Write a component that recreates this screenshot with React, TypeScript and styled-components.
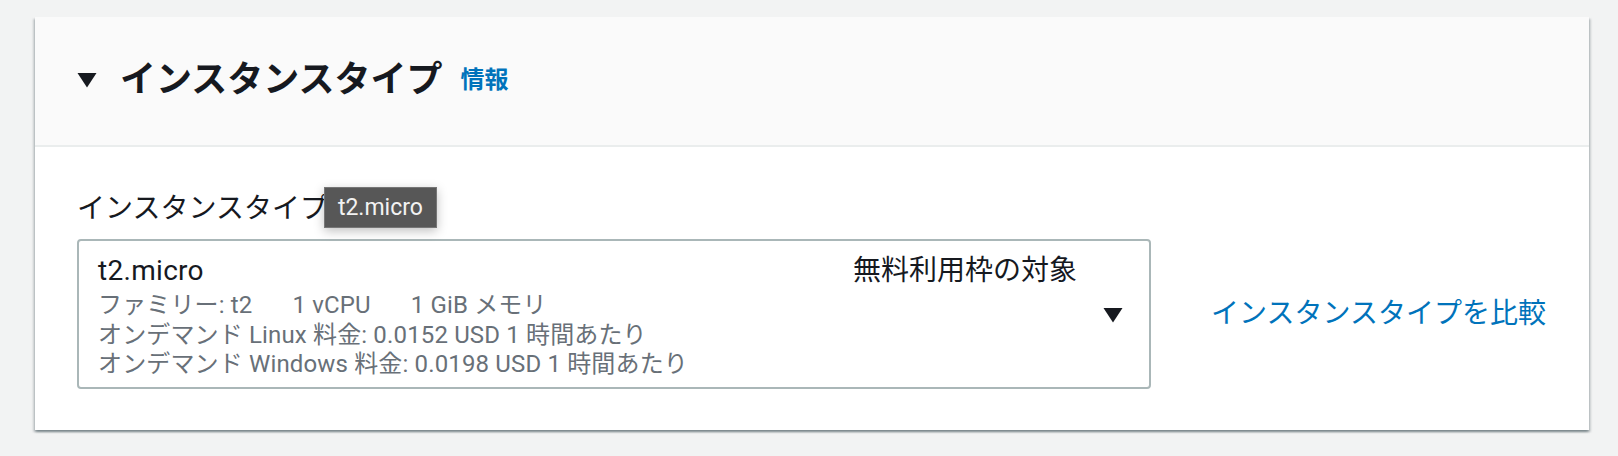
import React from "react";
import styled, { createGlobalStyle } from "styled-components";

const GlobalStyle = createGlobalStyle`
  html, body {
    margin: 0;
    padding: 0;
    background: #f2f3f3;
    font-family: Roboto, "Noto Sans CJK JP", sans-serif;
    color: #16191f;
  }
`;

const Page = styled.div`
  padding: 17px 29px 27px 35px;
`;

const Card = styled.section`
  background: #ffffff;
  box-shadow: 0 2px 2px 0 rgba(0, 28, 36, 0.3),
    2px 2px 2px 0 rgba(0, 28, 36, 0.15),
    -2px 2px 2px 0 rgba(0, 28, 36, 0.15);
`;

const CardHeader = styled.header`
  display: flex;
  align-items: center;
  background: #fafafa;
  border-bottom: 2px solid #eaeded;
  padding: 39px 42px 41px;
`;

const Caret = styled.svg`
  flex: none;
  display: block;
`;

const HeaderCaret = styled(Caret)`
  margin-right: 23px;
`;

const Title = styled.h2`
  margin: 0;
  font-size: 36px;
  line-height: 48px;
  font-weight: 700;
  color: #16191f;
`;

const InfoLink = styled.a`
  margin-left: 18px;
  font-size: 24px;
  line-height: 32px;
  font-weight: 700;
  color: #0073bb;
  text-decoration: none;
`;

const CardBody = styled.div`
  padding: 42px 42px 41px;
`;

const LabelWrap = styled.div`
  position: relative;
  display: inline-block;
  font-size: 28px;
  line-height: 40px;
  color: #16191f;
`;

const Tooltip = styled.span`
  position: absolute;
  left: calc(100% - 4px);
  top: -2px;
  box-sizing: border-box;
  height: 41px;
  padding: 0 13px;
  display: flex;
  align-items: center;
  background: #575757;
  border: 1px solid #767676;
  color: #f2f2f2;
  font-size: 23px;
  white-space: nowrap;
  box-shadow: 0 3px 10px rgba(0, 0, 0, 0.25);
`;

const Row = styled.div`
  display: flex;
  align-items: center;
  margin-top: 10px;
`;

const SelectBox = styled.div`
  box-sizing: border-box;
  width: 1074px;
  flex: none;
  display: flex;
  align-items: center;
  border: 2px solid #aab7b8;
  border-radius: 4px;
  padding: 10px 26px 7px 19px;
  background: #ffffff;
`;

const SelectContent = styled.div`
  flex: 1;
  min-width: 0;
`;

const TopLine = styled.div`
  display: flex;
  justify-content: space-between;
  align-items: center;
  font-size: 28px;
  line-height: 40px;
  color: #16191f;
`;

const ItemName = styled.span`
  letter-spacing: 0.3px;
`;

const DetailLine = styled.div`
  font-size: 24px;
  line-height: 29.5px;
  color: #687078;
  white-space: nowrap;
  letter-spacing: 0.15px;
`;

const Spec = styled.span`
  margin-right: 40px;
`;

const SelectCaret = styled(Caret)`
  margin-left: 26px;
`;

const CompareLink = styled.a`
  margin-left: 60px;
  font-size: 28px;
  line-height: 40px;
  color: #0073bb;
  text-decoration: none;
  white-space: nowrap;
`;

const Triangle = ({ className }: { className?: string }) => (
  <Caret className={className} width="20" height="16" viewBox="0 0 20 16">
    <polygon points="0.5,1 19.5,1 10,15.5" fill="#16191f" />
  </Caret>
);

export default function App() {
  return (
    <>
      <GlobalStyle />
      <Page>
        <Card>
          <CardHeader>
            <HeaderCaret as={Triangle} />
            <Title>インスタンスタイプ</Title>
            <InfoLink href="#">情報</InfoLink>
          </CardHeader>
          <CardBody>
            <LabelWrap>
              インスタンスタイプ
              <Tooltip>t2.micro</Tooltip>
            </LabelWrap>
            <Row>
              <SelectBox>
                <SelectContent>
                  <TopLine>
                    <ItemName>t2.micro</ItemName>
                    <span>無料利用枠の対象</span>
                  </TopLine>
                  <DetailLine>
                    <Spec>ファミリー: t2</Spec>
                    <Spec>1 vCPU</Spec>
                    <span>1 GiB メモリ</span>
                  </DetailLine>
                  <DetailLine>オンデマンド Linux 料金: 0.0152 USD 1 時間あたり</DetailLine>
                  <DetailLine>オンデマンド Windows 料金: 0.0198 USD 1 時間あたり</DetailLine>
                </SelectContent>
                <SelectCaret as={Triangle} />
              </SelectBox>
              <CompareLink href="#">インスタンスタイプを比較</CompareLink>
            </Row>
          </CardBody>
        </Card>
      </Page>
    </>
  );
}
